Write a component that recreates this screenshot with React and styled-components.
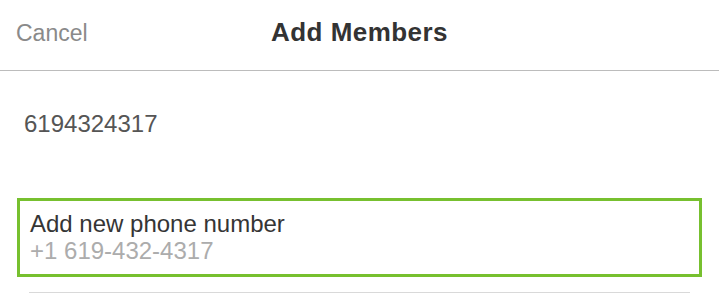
import React from "react";
import styled, { createGlobalStyle } from "styled-components";

const Global = createGlobalStyle`
  html, body { margin: 0; padding: 0; background: #ffffff; }
  body { font-family: "Liberation Sans", Arial, sans-serif; -webkit-font-smoothing: antialiased; }
`;

const Page = styled.div`
  display: flex;
  flex-direction: column;
  width: 719px;
`;

const Header = styled.header`
  display: grid;
  grid-template-columns: 1fr auto 1fr;
  align-items: baseline;
  height: 70px;
  box-sizing: content-box;
  border-bottom: 1px solid #bcbcbc;
`;

const HeaderInner = styled.div`
  padding-top: 18px;
  line-height: 28px;
`;

const CancelButton = styled.button`
  justify-self: start;
  background: none;
  border: none;
  padding: 0 0 0 16px;
  margin: 0;
  font-family: inherit;
  font-size: 23px;
  line-height: 28px;
  color: #8a8a8a;
  cursor: pointer;
`;

const Title = styled.h1`
  margin: 0;
  font-size: 26px;
  line-height: 28px;
  font-weight: 700;
  color: #333333;
  letter-spacing: 0.45px;
`;

const Content = styled.div`
  display: flex;
  flex-direction: column;
`;

const Query = styled.div`
  margin: 39px 0 0 24px;
  font-size: 24px;
  line-height: 28px;
  color: #555555;
`;

const Suggestion = styled.div`
  margin: 60px 17px 0 17px;
  border: 3px solid #77c02f;
  padding: 9px 10px 10px;
  display: flex;
  flex-direction: column;
`;

const Line = styled.div`
  font-size: 24px;
  line-height: 27px;
  color: ${(p) => (p.$muted ? "#acacac" : "#353535")};
`;

const Divider = styled.div`
  margin: 15px 29px 0;
  height: 1px;
  background: #d9d9d9;
`;

export default function App() {
  return (
    <Page>
      <Global />
      <Header>
        <HeaderInner>
          <CancelButton>Cancel</CancelButton>
        </HeaderInner>
        <HeaderInner>
          <Title>Add Members</Title>
        </HeaderInner>
        <div />
      </Header>
      <Content>
        <Query>6194324317</Query>
        <Suggestion>
          <Line>Add new phone number</Line>
          <Line $muted>+1 619-432-4317</Line>
        </Suggestion>
        <Divider />
      </Content>
    </Page>
  );
}
